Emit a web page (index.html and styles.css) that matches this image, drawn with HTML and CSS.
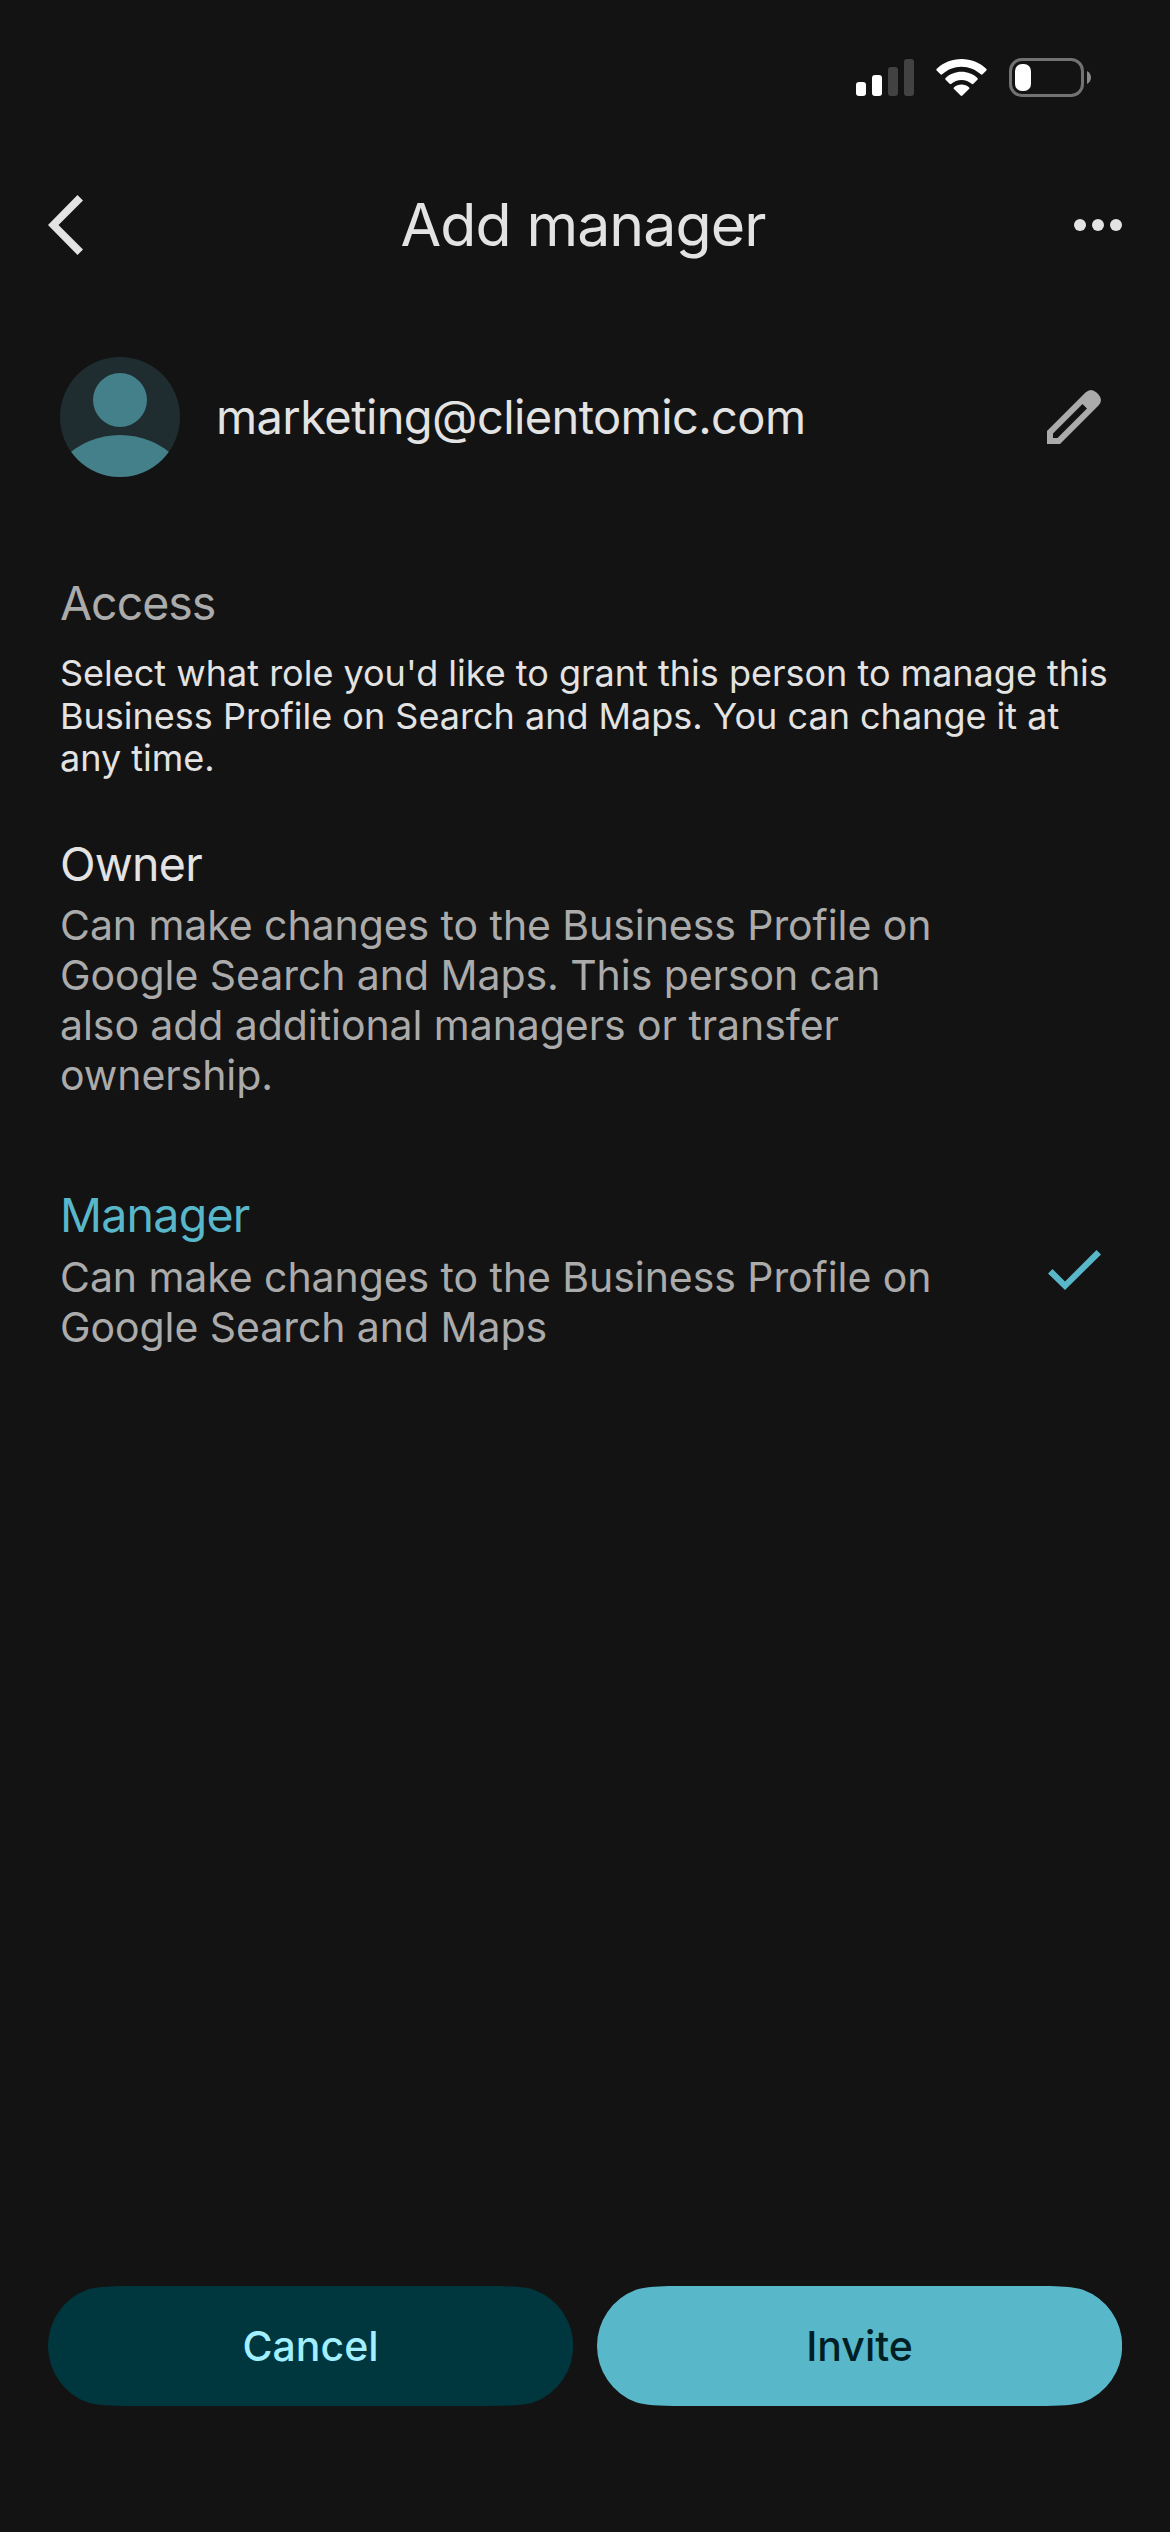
FILE: index.html
```html
<!DOCTYPE html>
<html lang="en">
<head>
<meta charset="utf-8">
<title>Add manager</title>
<link rel="stylesheet" href="styles.css">
</head>
<body>
<div class="screen">
  <div class="status">
    <svg class="signal" viewBox="0 0 58 37" width="58" height="37">
      <g fill="#fff"><rect x="0" y="23" width="10" height="14" rx="3"/><rect x="16" y="16" width="10" height="21" rx="3"/></g>
      <g fill="#424242"><rect x="32" y="8" width="10" height="29" rx="3"/><rect x="48" y="0" width="10" height="37" rx="3"/></g>
    </svg>
    <svg class="wifi" viewBox="0 0 51 37" width="51" height="37" fill="#fff">
      <path d="M25.5 0C35 0 43.7 3.6 50.2 9.7q.9.9.1 1.8L46.600 15.300q-.9.900-1.800 0C39.600 10.500 32.900 7.700 25.500 7.700S11.400 10.500 6.200 15.300q-.9.900-1.800 0L.7 11.500Q-.1 10.600.8 9.700C7.300 3.600 16 0 25.500 0Z"/>
      <path d="M25.500 12.800C31.600 12.800 37.200 15.100 41.400 18.900q.9.900 0 1.800L37.400 24.700q-.9.800-1.800.1C32.900 22.400 29.400 20.900 25.500 20.900S18.100 22.400 15.400 24.800q-.9.700-1.800-.1L9.600 20.700q-.9-.9 0-1.800C13.800 15.100 19.400 12.800 25.500 12.800Z"/>
      <path d="M25.500 25.600C28.300 25.600 30.900 26.600 32.900 28.200q1 .9.100 1.800L26.400 36.600q-.9.800-1.800 0L18 30q-.9-.9.100-1.800C20.100 26.600 22.700 25.600 25.500 25.600Z"/>
    </svg>
    <svg class="battery" viewBox="0 0 82 39" width="82" height="39">
      <rect x="1.500" y="1.500" width="72" height="36" rx="11.500" fill="none" stroke="#727272" stroke-width="3"/>
      <rect x="6" y="6" width="16" height="27" rx="7" fill="#fff"/>
      <path d="M78 13C83.300 15.500 83.300 23.500 78 26Z" fill="#8a8a8a"/>
    </svg>
  </div>

  <header class="topbar">
    <svg viewBox="0 0 35 60" width="35" height="60" fill="#e3e3e3"><path d="M29.500 0 35 5.500 10.500 30 35 54.500 29.500 60 0 30Z"/></svg>
    <h1 class="title">Add manager</h1>
    <svg viewBox="0 0 48 12" width="48" height="12" fill="#e3e3e3"><circle cx="6" cy="6" r="6"/><circle cx="24" cy="6" r="6"/><circle cx="42" cy="6" r="6"/></svg>
  </header>

  <main class="content">
    <section class="person">
      <svg viewBox="0 0 120 120" width="120" height="120">
        <clipPath id="disc"><circle cx="60" cy="60" r="60"/></clipPath>
        <circle cx="60" cy="60" r="60" fill="#1f2d30"/>
        <g clip-path="url(#disc)" fill="#43808a"><circle cx="60" cy="43" r="27"/><circle cx="60" cy="158" r="80"/></g>
      </svg>
      <span class="email">marketing@clientomic.com</span>
      <svg class="pencil" viewBox="0 0 54 54" width="54" height="54"><path fill="#ababab" fill-rule="evenodd" d="M0 54V41L38.500 2.500Q44 -2.500 49.500 2.500L51.500 4.500Q56.500 10 51.500 15.500L13 54ZM6 48H10.500L40 18.500 35.500 14 6 43.500Z"/></svg>
    </section>

    <h2 class="heading access">Access</h2>
    <p class="intro">Select what role you'd like to grant this person to manage this Business Profile on Search and Maps. You can change it at any time.</p>

    <section class="role owner">
      <div class="role-text">
        <h3 class="heading name">Owner</h3>
        <p class="detail">Can make changes to the Business Profile on Google Search and Maps. This person can also add additional managers or transfer ownership.</p>
      </div>
    </section>
    <section class="role manager">
      <div class="role-text">
        <h3 class="heading name">Manager</h3>
        <p class="detail">Can make changes to the Business Profile on Google Search and Maps</p>
      </div>
      <svg class="check" viewBox="0 0 53 40" width="53" height="40" fill="#59b7ca"><path d="M4.500 19 17 31.500 48.500 0 53 4.500 17 40 0 23.500Z"/></svg>
    </section>
  </main>

  <footer class="actions">
    <button class="button cancel">Cancel</button>
    <button class="button invite">Invite</button>
  </footer>
</div>
</body>
</html>
```
FILE: styles.css
```css
* { box-sizing: border-box; margin: 0; }

body {
  background: #131313;
  color: #e3e3e3;
  font-family: Inter, "Liberation Sans", sans-serif;
}

svg { display: block; flex: none; }

.screen {
  display: flex;
  flex-direction: column;
  width: 1170px;
  height: 2532px;
}

.status {
  display: flex;
  justify-content: flex-end;
  gap: 22px;
  height: 180px;
  padding: 58px 79px 0 0;
}

.signal, .wifi { margin-top: 1px; }

.topbar {
  display: flex;
  align-items: center;
  justify-content: space-between;
  height: 90px;
  padding: 0 48px;
}

.title {
  padding: 0 0 2px 9px;
  font-size: 59px;
  font-weight: 400;
  letter-spacing: -0.94px;
}

.content { padding: 0 60px; }

.person {
  display: flex;
  align-items: center;
  height: 120px;
  margin-top: 87px;
}

.email {
  flex: 1;
  padding: 0 0 2px 36px;
  font-size: 47px;
  letter-spacing: -0.6px;
}

.pencil { margin-right: 9px; }

.heading {
  font-size: 46.5px;
  font-weight: 400;
  line-height: 56px;
  letter-spacing: -0.75px;
}

.access {
  margin-top: 98px;
  color: #ababab;
  letter-spacing: -1px;
}

.intro {
  width: 1049px;
  margin-top: 21px;
  font-size: 36px;
  line-height: 42.67px;
}

.role {
  display: flex;
  justify-content: space-between;
}

.role-text { width: 886px; }

.owner { margin-top: 56px; }

.manager { margin-top: 87px; }

.manager .name { color: #59b7ca; }

.detail {
  margin-top: 8px;
  color: #ababab;
  font-size: 41px;
  line-height: 50px;
  letter-spacing: -0.07px;
}

.manager .detail { margin-top: 9px; }

.check { margin: 63px 9px 0 0; }

.actions {
  display: flex;
  gap: 24px;
  margin-top: auto;
  padding: 0 48px 126px;
}

.button {
  width: 525px;
  height: 120px;
  padding: 0 0 1px;
  border: 0;
  font: 500 41px Inter, "Liberation Sans", sans-serif;
  clip-path: path("M0 60A60 60 0 0 1 39 3.700C48 .8 62 0 84 0H441C463 0 477 .8 486 3.700A60 60 0 0 1 486 116.300C477 119.200 463 120 441 120H84C62 120 48 119.200 39 116.300A60 60 0 0 1 0 60Z");
}

.cancel { background: #00363d; color: #a1efff; }

.invite { background: #59b7ca; color: #001f24; }
```
